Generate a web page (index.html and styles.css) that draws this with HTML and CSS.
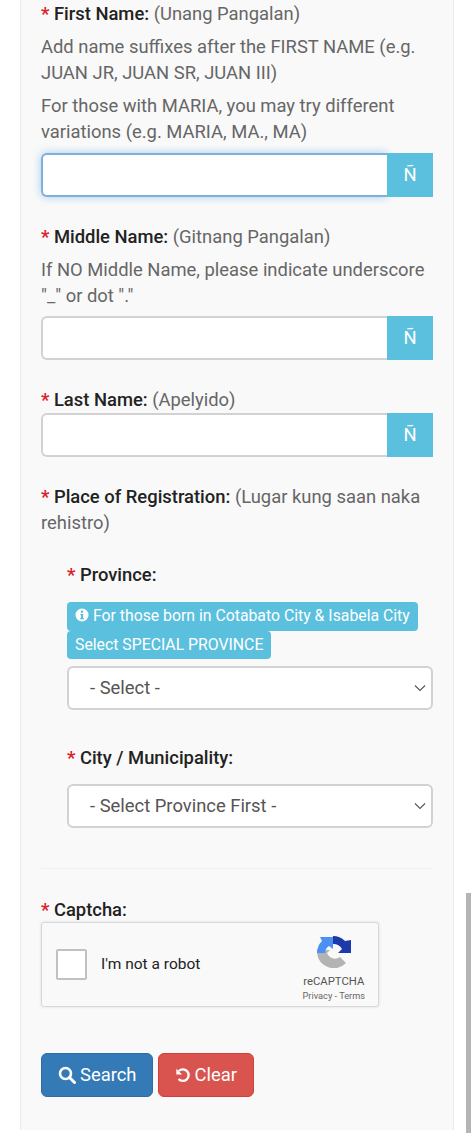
FILE: index.html
```html
<!DOCTYPE html>
<html lang="en">

<head>
    <meta charset="UTF-8">
    <title>Search</title>
    <link rel="stylesheet" href="styles.css">
</head>

<body>
    <form class="panel">
        <div class="field first">
            <label class="lbl"><span class="req">*</span> <b>First Name:</b> (Unang Pangalan)</label>
            <p class="help">Add name suffixes after the FIRST NAME (e.g. JUAN JR, JUAN SR, JUAN III)</p>
            <p class="help">For those with MARIA, you may try different variations (e.g. MARIA, MA., MA)</p>
            <div class="group">
                <input class="ctrl focus" type="text">
                <span class="addon">Ñ</span>
            </div>
        </div>

        <div class="field">
            <label class="lbl"><span class="req">*</span> <b>Middle Name:</b> (Gitnang Pangalan)</label>
            <p class="help">If NO Middle Name, please indicate underscore "_" or dot "."</p>
            <div class="group">
                <input class="ctrl" type="text">
                <span class="addon">Ñ</span>
            </div>
        </div>

        <div class="field">
            <label class="lbl tight"><span class="req">*</span> <b>Last Name:</b> (Apelyido)</label>
            <div class="group">
                <input class="ctrl" type="text">
                <span class="addon">Ñ</span>
            </div>
        </div>

        <div class="field place">
            <label class="lbl"><span class="req">*</span> <b>Place of Registration:</b> (Lugar kung saan naka rehistro)</label>
        </div>

        <div class="sub">
            <div class="sub-field">
                <label class="lbl"><span class="req">*</span> <b>Province:</b></label>
                <div class="notes">
                    <span class="note"><svg class="info" viewBox="0 0 14 14"><circle cx="7" cy="7" r="6.5" fill="#fff"/><rect x="5.9" y="2.6" width="2.3" height="2.2" fill="#5bc0de"/><path d="M5.2 5.9h3v4.2h.8v1.2H5.2v-1.2h.8v-3h-.8z" fill="#5bc0de"/></svg> For those born in Cotabato City &amp; Isabela City</span>
                    <span class="note">Select SPECIAL PROVINCE</span>
                </div>
                <div class="select">
                    <span>- Select -</span>
                    <svg class="chev" viewBox="0 0 12 8"><path d="M1 1.5l5 5 5-5" fill="none" stroke="#555" stroke-width="1.1"/></svg>
                </div>
            </div>
            <div class="sub-field city">
                <label class="lbl"><span class="req">*</span> <b>City / Municipality:</b></label>
                <div class="select">
                    <span>- Select Province First -</span>
                    <svg class="chev" viewBox="0 0 12 8"><path d="M1 1.5l5 5 5-5" fill="none" stroke="#555" stroke-width="1.1"/></svg>
                </div>
            </div>
        </div>

        <hr class="rule">

        <label class="lbl"><span class="req">*</span> <b>Captcha:</b></label>
        <div class="captcha">
            <span class="check"></span>
            <span class="robot">I'm not a robot</span>
            <div class="rc">
                <svg class="rc-logo" viewBox="0 0 34 32">
                    <path d="M0 17A17 17 0 0 0 29 27L23 21A8.500 8.500 0 0 1 10 17L13 14H0z" fill="#b3b3b3"/>
                    <path d="M16 0A17 17 0 0 1 28 5L34 4V17H21L25 13A10 10 0 0 0 16 8z" fill="#1c3aa9"/>
                    <path d="M0 17A17 17 0 0 1 5 5L3 1H16V13L12 10A9 9 0 0 0 8 17z" fill="#4a90f5"/>
                </svg>
                <span class="rc-name">reCAPTCHA</span>
                <span class="rc-links">Privacy - Terms</span>
            </div>
        </div>

        <div class="actions">
            <button class="btn blue" type="button"><svg class="ic" viewBox="0 0 18 18"><circle cx="7.500" cy="7.500" r="5.500" fill="none" stroke="#fff" stroke-width="2.600"/><path d="M11.500 11.500l5 5" stroke="#fff" stroke-width="3" stroke-linecap="round"/></svg> Search</button>
            <button class="btn red" type="button"><svg class="ic" viewBox="0 0 18 18"><path d="M4.300 4.500A6.500 6.500 0 1 1 4 13.500" fill="none" stroke="#fff" stroke-width="2.600"/><path d="M1.500 2v6.500H8z" fill="#fff"/></svg> Clear</button>
        </div>
    </form>

    <div class="scrollbar"></div>
</body>

</html>
```

FILE: styles.css
```css
html,
body {
    margin: 0;
    padding: 0;
    height: 1133px;
    overflow: hidden;
    background: #fff;
}

body {
    font-family: Roboto, "Liberation Sans", sans-serif;
    font-size: 18.400px;
    line-height: 26px;
    color: #666;
}

.panel {
    box-sizing: border-box;
    width: 434px;
    height: 1130px;
    margin-left: 20px;
    padding: 1px 20px 0;
    background: #f9f9f9;
    border: 1px solid #e9e9e9;
    border-top: 0;
    border-bottom: 0;
}

.lbl {
    display: block;
}

.lbl b {
    font-weight: 500;
    color: #222;
}

.req {
    color: #d9232d;
    font-weight: 700;
}

.help {
    margin: 7px 0 0;
}

.field {
    margin-top: 27px;
}

.field.first {
    margin-top: 0;
}

.group {
    display: flex;
    height: 44px;
    margin-top: 7px;
}

.first .group {
    margin-top: 8px;
}

.lbl.tight + .group {
    margin-top: 0;
}

.ctrl {
    box-sizing: border-box;
    flex: 1;
    min-width: 0;
    height: 44px;
    padding: 0 12px;
    background: #fff;
    border: 2px solid #d2d2d2;
    border-right: 0;
    border-radius: 6px 0 0 6px;
    outline: none;
}

.ctrl.focus {
    border-color: #7fb0dc;
    box-shadow: 0 0 8px rgba(102, 175, 233, 0.6);
}

.addon {
    width: 46px;
    background: #5bc0de;
    color: #fff;
    display: flex;
    align-items: center;
    justify-content: center;
}

.place {
    margin-top: 27px;
}

.sub {
    padding-left: 26px;
    margin-top: 26px;
}

.notes {
    display: flex;
    flex-direction: column;
    align-items: flex-start;
    margin-top: 14px;
}

.note {
    display: block;
    background: #5bc0de;
    color: #fff;
    font-size: 15.800px;
    line-height: 28.500px;
    padding: 0 8px;
    border-radius: 4px;
    white-space: nowrap;
}

.info {
    width: 14px;
    height: 14px;
    vertical-align: -1px;
}

.select {
    box-sizing: border-box;
    display: flex;
    align-items: center;
    justify-content: space-between;
    height: 44px;
    margin-top: 7px;
    padding: 0 5px 0 21px;
    background: #fff;
    border: 2px solid #d2d2d2;
    border-radius: 6px;
    color: #555;
}

.chev {
    width: 12px;
    height: 8px;
}

.sub-field.city {
    margin-top: 35px;
}

.city .select {
    margin-top: 13px;
}

.rule {
    height: 1px;
    margin: 40px 0 28px;
    background: #eee;
    border: 0;
}

.captcha {
    box-sizing: border-box;
    display: flex;
    align-items: center;
    width: 338px;
    height: 85px;
    margin-top: -1px;
    padding: 0 13px 0 14px;
    background: #f9f9f9;
    border: 1px solid #d9d9d9;
    border-radius: 3px;
    box-shadow: 0 0 3px rgba(0, 0, 0, 0.12);
}

.check {
    box-sizing: border-box;
    width: 31px;
    height: 31px;
    background: #fff;
    border: 2px solid #c1c1c1;
    border-radius: 2px;
}

.robot {
    margin-left: 14px;
    margin-top: -2px;
    font-size: 15.500px;
    color: #222;
}

.rc {
    margin-left: auto;
    display: flex;
    flex-direction: column;
    align-items: center;
    margin-top: 9px;
}

.rc-logo {
    width: 34px;
    height: 32px;
    margin-bottom: 7px;
}

.rc-name {
    font-size: 11.300px;
    line-height: 14px;
    color: #555;
}

.rc-links {
    font-size: 9.200px;
    line-height: 13px;
    color: #666;
}

.actions {
    display: flex;
    gap: 5px;
    margin-top: 46px;
}

.btn {
    display: flex;
    align-items: center;
    gap: 4px;
    height: 44px;
    padding: 0 16px;
    color: #fff;
    font: inherit;
    border: 1px solid transparent;
    border-radius: 6px;
}

.blue {
    padding-right: 15px;
    background: #337ab7;
    border-color: #2e6da4;
}

.red {
    background: #d9534f;
    border-color: #d43f3a;
}

.ic {
    width: 18px;
    height: 18px;
}

.red .ic {
    width: 16px;
    height: 16px;
}

.scrollbar {
    position: absolute;
    left: 466px;
    top: 893px;
    width: 5px;
    height: 240px;
    background: #b5b5b5;
}
```
